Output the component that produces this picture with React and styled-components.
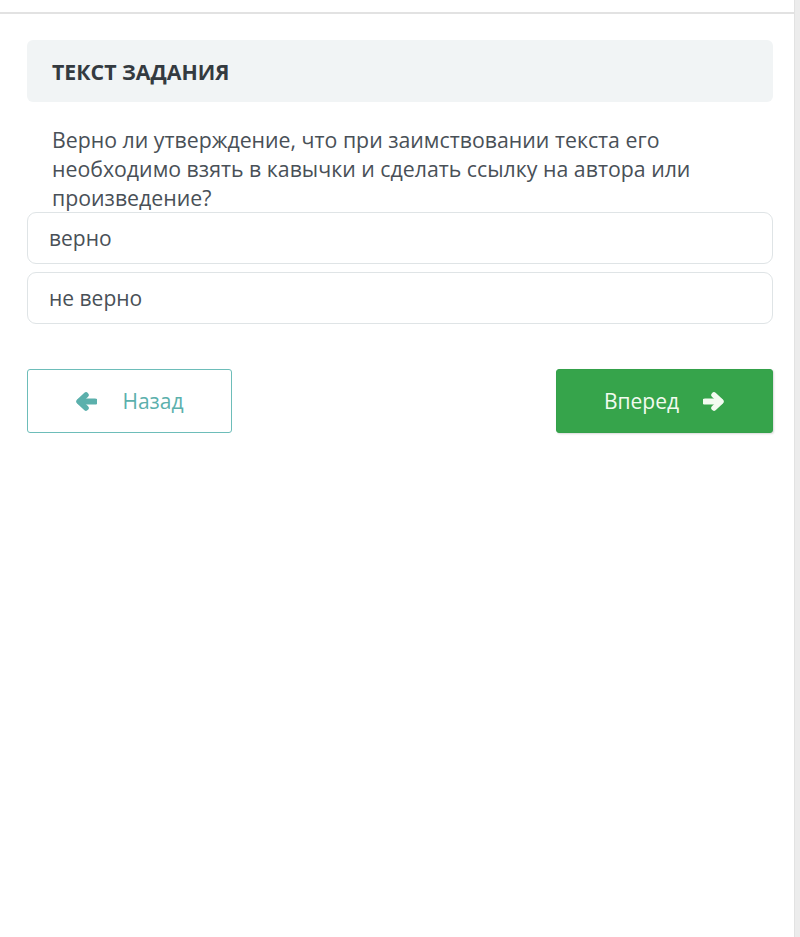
import React from 'react';
import styled, { createGlobalStyle } from 'styled-components';

const GlobalStyle = createGlobalStyle`
  html, body {
    margin: 0;
    padding: 0;
    background: #ffffff;
  }
  body {
    font-family: 'Open Sans', 'Noto Sans', sans-serif;
  }
`;

const Page = styled.div`
  display: flex;
  min-height: 937px;
`;

const Main = styled.div`
  flex: 1;
  display: flex;
  flex-direction: column;
`;

const TopRule = styled.div`
  height: 12px;
  border-bottom: 2px solid #e2e2e2;
`;

const ScrollStrip = styled.div`
  width: 5px;
  background: #ececec;
  border-left: 1px solid #e2e2e2;
`;

const Content = styled.div`
  padding: 26px 21px 0 27px;
  display: flex;
  flex-direction: column;
`;

const TaskHeader = styled.div`
  background: #f1f4f5;
  border-radius: 6px;
  height: 62px;
  padding: 0 25px;
  display: flex;
  align-items: center;
  font-size: 21.3px;
  font-weight: 700;
  color: #343a40;
  text-transform: uppercase;
`;

const Question = styled.div`
  padding: 23px 25px 0 25px;
  font-size: 21.3px;
  line-height: 29px;
  color: #495057;
`;

const Options = styled.div`
  display: flex;
  flex-direction: column;
  gap: 8px;
`;

const Option = styled.div`
  height: 50px;
  border: 1px solid #dfe4e6;
  border-radius: 9px;
  padding: 0 21px;
  display: flex;
  align-items: center;
  font-size: 21px;
  color: #495057;
`;

const Nav = styled.div`
  display: flex;
  justify-content: space-between;
  margin-top: 45px;
`;

const NavButton = styled.button`
  height: 64px;
  width: ${(p) => p.$width}px;
  border-radius: 3px;
  font-family: 'Open Sans', 'Noto Sans', sans-serif;
  font-size: 21px;
  display: flex;
  align-items: center;
  justify-content: center;
  gap: ${(p) => p.$gap}px;
  cursor: pointer;
  padding: 0;
  border: 1px solid ${(p) => (p.$primary ? '#33a14a' : '#6dbdb9')};
  background: ${(p) => (p.$primary ? '#36a44b' : '#ffffff')};
  color: ${(p) => (p.$primary ? '#f2fbf0' : '#5bb0ac')};
  box-shadow: ${(p) => (p.$primary ? '1px 1px 2px rgba(0,0,0,0.15)' : 'none')};
`;

const ArrowSvg = styled.svg`
  width: 22px;
  height: 19px;
  flex: none;
  transform: ${(p) => (p.$right ? 'scaleX(-1)' : 'none')};
`;

const Arrow = ({ right }) => (
  <ArrowSvg viewBox="0 0 22 19" $right={right} fill="none" stroke="currentColor">
    <path d="M5 9.5H20" strokeWidth="6" strokeLinecap="round" />
    <path d="M11 3L4 9.5L11 16" strokeWidth="5.5" strokeLinecap="round" strokeLinejoin="round" />
  </ArrowSvg>
);

export default function App() {
  return (
    <Page>
      <GlobalStyle />
      <Main>
        <TopRule />
        <Content>
          <TaskHeader>Текст задания</TaskHeader>
          <Question>
            Верно ли утверждение, что при заимствовании текста его необходимо взять в кавычки и
            сделать ссылку на автора или произведение?
          </Question>
          <Options>
            <Option>верно</Option>
            <Option>не верно</Option>
          </Options>
          <Nav>
            <NavButton $width={205} $gap={25}>
              <Arrow />
              Назад
            </NavButton>
            <NavButton $primary $width={217} $gap={24}>
              Вперед
              <Arrow right />
            </NavButton>
          </Nav>
        </Content>
      </Main>
      <ScrollStrip />
    </Page>
  );
}
